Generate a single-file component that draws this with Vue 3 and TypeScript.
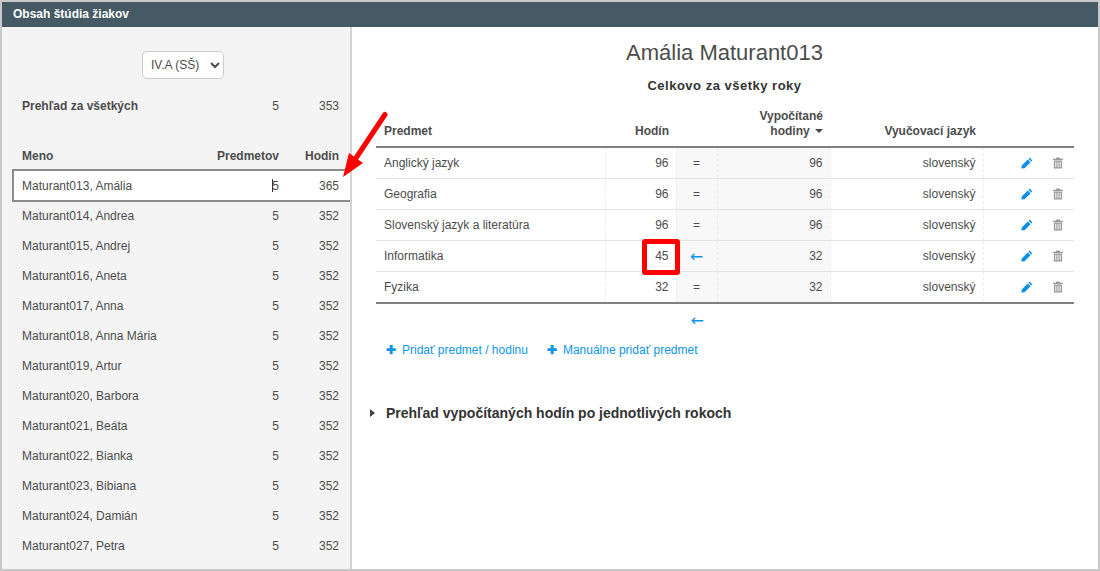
<template>
  <div class="frame">
    <header class="topbar">Obsah štúdia žiakov</header>
    <div class="content">
      <aside class="sidebar">
        <div class="class-picker">
          <select class="class-select">
            <option>IV.A (SŠ)</option>
          </select>
        </div>
        <div class="student-row summary">
          <span class="name">Prehľad za všetkých</span>
          <span class="num">5</span>
          <span class="num">353</span>
        </div>
        <div class="student-row list-head">
          <span class="name">Meno</span>
          <span class="num">Predmetov</span>
          <span class="num">Hodín</span>
        </div>
        <div
          v-for="s in students"
          :key="s.name"
          class="student-row student"
          :class="{ selected: s.selected }"
        >
          <span class="name">{{ s.name }}</span>
          <span class="num"><i v-if="s.selected" class="caret"></i>5</span>
          <span class="num">{{ s.hours }}</span>
        </div>
      </aside>

      <main class="detail">
        <h1>Amália Maturant013</h1>
        <h2>Celkovo za všetky roky</h2>
        <table class="subjects">
          <thead>
            <tr>
              <th class="left">Predmet</th>
              <th>Hodín</th>
              <th></th>
              <th>Vypočítané<br />hodiny <i class="sort"></i></th>
              <th>Vyučovací jazyk</th>
              <th></th>
            </tr>
          </thead>
          <tbody>
            <tr v-for="r in rows" :key="r.name">
              <td class="left">{{ r.name }}</td>
              <td class="hours">
                {{ r.hours }}
                <span v-if="r.flag" class="flag"></span>
              </td>
              <td class="sign">
                <span v-if="r.flag" class="arrow">←</span>
                <span v-else>=</span>
              </td>
              <td class="calc">{{ r.calc }}</td>
              <td>slovenský</td>
              <td class="actions">
                <svg class="icon" viewBox="0 0 12 12" width="12" height="12">
                  <path fill="#0d8fe8" d="M8.6 .6 11.4 3.400 10.200 4.600 7.400 1.800ZM6.800 2.400 9.600 5.200 3.600 11.200.4 11.600.8 8.400Z" />
                </svg>
                <svg class="icon trash" viewBox="0 0 10 12" width="10" height="12">
                  <path fill="#999" fill-rule="evenodd" d="M3.4 0.6H6.6L7.2 1.700H10V2.900H0V1.700H2.800ZM.9 3.600H9.100V11.400H.9ZM2.300 4.800V10.200H3.300V4.800ZM4.500 4.800V10.200H5.500V4.800ZM6.700 4.800V10.200H7.700V4.800Z" />
                </svg>
              </td>
            </tr>
          </tbody>
        </table>
        <div class="below-arrow"><span class="arrow">←</span></div>
        <div class="links">
          <a><b>✚</b>Pridať predmet / hodinu</a>
          <a><b>✚</b>Manuálne pridať predmet</a>
        </div>
        <div class="yearly">
          <i class="tri"></i>
          <span>Prehľad vypočítaných hodín po jednotlivých rokoch</span>
        </div>
      </main>
    </div>

    <svg class="pointer" viewBox="0 0 60 80" width="60" height="80">
      <path d="M45 4.500 16 48" stroke="#fe0000" stroke-width="5" stroke-linecap="round" fill="none" />
      <path d="M3 67 9 43 23 53Z" fill="#fe0000" />
    </svg>
  </div>
</template>

<script setup lang="ts">
interface Student {
  name: string
  hours: number
  selected?: boolean
}

interface SubjectRow {
  name: string
  hours: number
  calc: number
  flag?: boolean
}

const students: Student[] = [
  { name: 'Maturant013, Amália', hours: 365, selected: true },
  { name: 'Maturant014, Andrea', hours: 352 },
  { name: 'Maturant015, Andrej', hours: 352 },
  { name: 'Maturant016, Aneta', hours: 352 },
  { name: 'Maturant017, Anna', hours: 352 },
  { name: 'Maturant018, Anna Mária', hours: 352 },
  { name: 'Maturant019, Artur', hours: 352 },
  { name: 'Maturant020, Barbora', hours: 352 },
  { name: 'Maturant021, Beáta', hours: 352 },
  { name: 'Maturant022, Bianka', hours: 352 },
  { name: 'Maturant023, Bibiana', hours: 352 },
  { name: 'Maturant024, Damián', hours: 352 },
  { name: 'Maturant027, Petra', hours: 352 }
]

const rows: SubjectRow[] = [
  { name: 'Anglický jazyk', hours: 96, calc: 96 },
  { name: 'Geografia', hours: 96, calc: 96 },
  { name: 'Slovenský jazyk a literatúra', hours: 96, calc: 96 },
  { name: 'Informatika', hours: 45, calc: 32, flag: true },
  { name: 'Fyzika', hours: 32, calc: 32 }
]
</script>

<style>
html,
body {
  margin: 0;
  background: #fff;
}
</style>

<style scoped>
.frame {
  position: relative;
  box-sizing: border-box;
  width: 1100px;
  height: 571px;
  border: 2px solid #c8c8c8;
  overflow: hidden;
  font-family: "Liberation Sans", Arial, sans-serif;
  font-size: 12px;
  color: #4c4c4c;
  background: #fff;
}

.topbar {
  height: 25px;
  line-height: 24px;
  padding-left: 11px;
  background: #455a64;
  color: #fff;
  font-weight: 700;
}

.content {
  display: flex;
  height: 542px;
}

.sidebar {
  box-sizing: border-box;
  width: 350px;
  flex: none;
  background: #f4f4f4;
  border-right: 2px solid #d4d4d4;
  overflow: hidden;
}

.class-picker {
  display: flex;
  justify-content: center;
  padding: 24px 0 0 14px;
  height: 28px;
}

.class-select {
  width: 82px;
  height: 28px;
  padding-left: 4px;
  background: #fff;
  border: 1px solid #ccc;
  border-radius: 5px;
  color: #4c4c4c;
  font-family: inherit;
  font-size: 12px;
}

.student-row {
  display: grid;
  grid-template-columns: 1fr 70px 60px;
  align-items: center;
  height: 30px;
  padding: 0 11px 0 20px;
}

.num {
  position: relative;
  text-align: right;
}

.summary {
  margin-top: 12px;
  font-weight: 700;
}

.summary .num {
  font-weight: 400;
}

.list-head {
  margin: 20px 0 -2px;
  font-weight: 700;
}

.list-head .num {
  font-weight: 700;
  white-space: nowrap;
}

.student.selected {
  box-sizing: border-box;
  height: 33px;
  margin: 0 -2px -1px 10px;
  padding: 0 13px 0 8px;
  background: #fff;
  border: 2px solid #8c8c8c;
  border-right: none;
}

.caret {
  position: absolute;
  right: 6px;
  top: 0;
  width: 1px;
  height: 13px;
  background: #333;
}

.detail {
  flex: 1;
  padding: 0 24px;
  min-width: 0;
}

h1 {
  margin: 0;
  padding: 12px 1px 0 0;
  height: 32px;
  line-height: 28px;
  text-align: center;
  font-size: 22px;
  font-weight: 400;
  color: #4c4c4c;
}

h2 {
  margin: 0;
  padding: 6px 1px 0 0;
  height: 24px;
  line-height: 18px;
  text-align: center;
  font-size: 13px;
  font-weight: 700;
  letter-spacing: 0.5px;
  color: #333;
}

.subjects {
  width: 698px;
  table-layout: fixed;
  border-collapse: collapse;
  border-bottom: 2px solid #808080;
}

th {
  height: 38px;
  padding: 0 7px 7px;
  vertical-align: bottom;
  text-align: right;
  font-weight: 700;
  line-height: 15px;
  color: #4c4c4c;
  border-bottom: 2px solid #808080;
}

th:nth-child(1) { width: 214px; padding-left: 8px; }
th:nth-child(2) { width: 57px; }
th:nth-child(3) { width: 27px; }
th:nth-child(4) { width: 99px; }
th:nth-child(5) { width: 139px; }

td {
  height: 30px;
  padding: 0 7px;
  text-align: right;
  border-bottom: 1px solid #e4e4e4;
  border-right: 1px dashed #ececec;
}

td.left {
  padding-left: 8px;
}

tbody tr:last-child td {
  border-bottom: none;
}

.left {
  text-align: left;
}

.hours {
  position: relative;
}

.flag {
  position: absolute;
  left: 36px;
  top: -2px;
  width: 38px;
  height: 36px;
  box-sizing: border-box;
  border: 5px solid #fe0000;
  border-radius: 3px;
}

.sign {
  text-align: center;
  background: #f8f8f8;
  padding: 0;
}

.calc {
  background: #f8f8f8;
}

.actions {
  border-right: none;
  white-space: nowrap;
  padding: 0 11px 0 0;
}

.icon {
  vertical-align: -2px;
}

.trash {
  margin-left: 20px;
}

.arrow {
  color: #0d95e8;
  font-size: 16px;
  font-family: "DejaVu Sans", sans-serif;
}

.sort {
  display: inline-block;
  width: 0;
  height: 0;
  margin-left: 2px;
  border: 4px solid transparent;
  border-top-color: #444;
  border-bottom: none;
  vertical-align: 2px;
}

.below-arrow {
  width: 328px;
  padding-top: 7px;
  height: 21px;
  text-align: right;
}

.links {
  display: flex;
  gap: 19px;
  padding: 11px 0 0 10px;
  color: #0d95e8;
}

.links b {
  margin-right: 6px;
  font-size: 12px;
}

.yearly {
  display: flex;
  align-items: center;
  gap: 11px;
  margin: 48px 0 0 -6px;
  font-size: 14px;
  font-weight: 700;
  color: #333;
}

.tri {
  width: 0;
  height: 0;
  border: 4px solid transparent;
  border-left: 5px solid #444;
  border-right: none;
}

.pointer {
  position: absolute;
  left: 338px;
  top: 108px;
}
</style>
